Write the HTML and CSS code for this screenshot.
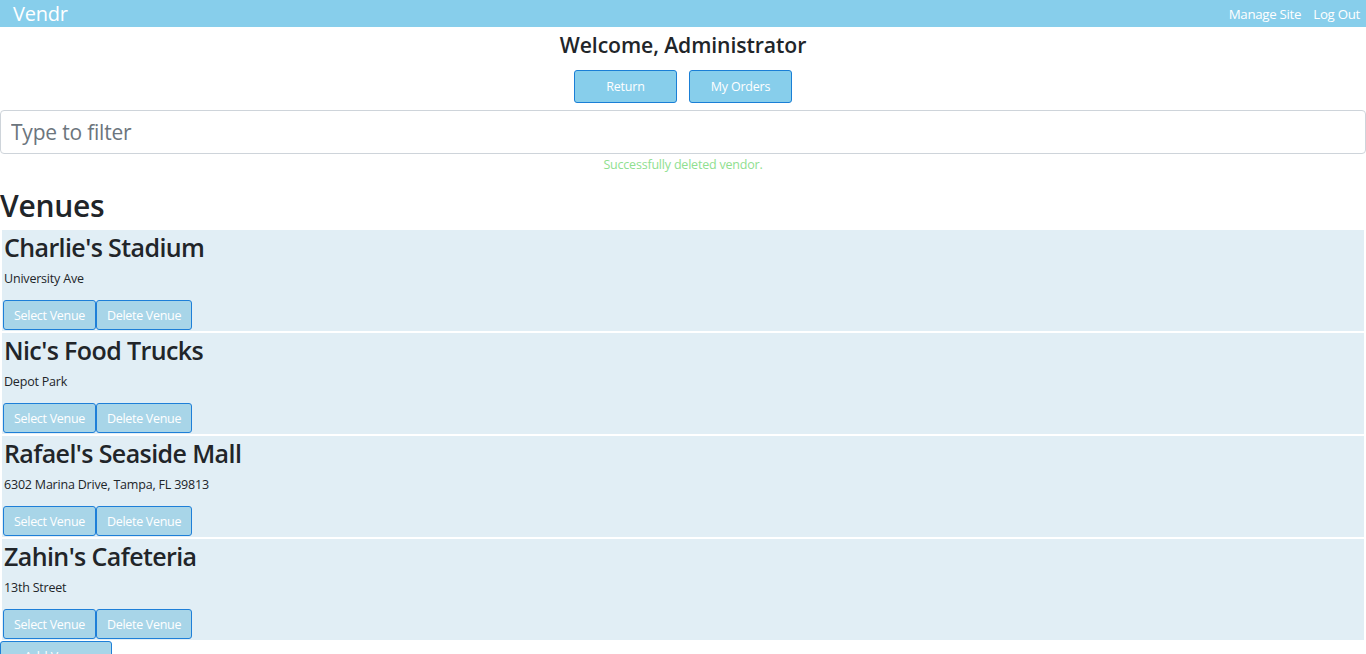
FILE: index.html
```html
<!DOCTYPE html>
<html>
<head>
<meta charset="utf-8">
<link rel="stylesheet" href="styles.css">
</head>
<body>
<nav class="navbar">
  <span class="brand">Vendr</span>
  <div class="nav-links">
    <a class="nav-link">Manage Site</a>
    <a class="nav-link">Log Out</a>
  </div>
</nav>
<h2 class="welcome">Welcome, Administrator</h2>
<div class="top-buttons">
  <button class="btn-top">Return</button>
  <button class="btn-top">My Orders</button>
</div>
<input class="filter" type="text" placeholder="Type to filter">
<p class="success">Successfully deleted vendor.</p>
<h1 class="venues-title">Venues</h1>
<div class="venue-list">
  <div class="venue">
    <h3 class="venue-name">Charlie's Stadium</h3>
    <p class="venue-addr">University Ave</p>
    <div class="venue-actions"><button class="btn-venue">Select Venue</button><button class="btn-venue">Delete Venue</button></div>
  </div>
  <div class="venue">
    <h3 class="venue-name">Nic's Food Trucks</h3>
    <p class="venue-addr">Depot Park</p>
    <div class="venue-actions"><button class="btn-venue">Select Venue</button><button class="btn-venue">Delete Venue</button></div>
  </div>
  <div class="venue">
    <h3 class="venue-name">Rafael's Seaside Mall</h3>
    <p class="venue-addr">6302 Marina Drive, Tampa, FL 39813</p>
    <div class="venue-actions"><button class="btn-venue">Select Venue</button><button class="btn-venue">Delete Venue</button></div>
  </div>
  <div class="venue">
    <h3 class="venue-name">Zahin's Cafeteria</h3>
    <p class="venue-addr">13th Street</p>
    <div class="venue-actions"><button class="btn-venue">Select Venue</button><button class="btn-venue">Delete Venue</button></div>
  </div>
</div>
<button class="btn-add">Add Venue</button>
</body>
</html>
```

FILE: styles.css
```css
* { box-sizing: border-box; }
html, body { margin: 0; padding: 0; }
body {
  font-family: "Open Sans", "Noto Sans", sans-serif;
  color: #212529;
  background: #fff;
  overflow: hidden;
}
.navbar {
  height: 27px;
  background: #87ceeb;
  display: flex;
  align-items: center;
  justify-content: space-between;
  padding: 0 6px 0 13px;
}
.brand {
  color: #fff;
  font-size: 20px;
  line-height: 27px;
  letter-spacing: -0.2px;
}
.nav-links { display: flex; gap: 12px; }
.nav-link {
  color: #fff;
  font-size: 13.3px;
  letter-spacing: -0.3px;
}
.welcome {
  margin: 4px 0 0;
  text-align: center;
  font-size: 21.2px;
  font-weight: 600;
  line-height: 28px;
  letter-spacing: -0.1px;
}
.top-buttons {
  display: flex;
  justify-content: center;
  gap: 12px;
  margin-top: 11px;
}
.btn-top {
  width: 103px;
  height: 33px;
  background: #87ceeb;
  border: 1px solid #1a7fd6;
  border-radius: 3px;
  color: #fff;
  font-family: inherit;
  font-size: 12.5px;
  letter-spacing: -0.2px;
}
.filter {
  display: block;
  width: 100%;
  height: 44px;
  margin-top: 7px;
  border: 1px solid #ced4da;
  border-radius: 4px;
  padding: 0 10px;
  font-family: inherit;
  font-size: 21px;
  color: #495057;
}
.filter::placeholder { color: #6c757d; letter-spacing: -0.2px; }
.success {
  margin: 2px 0 0;
  text-align: center;
  color: #8fe08f;
  font-size: 12.5px;
  line-height: 18px;
  letter-spacing: -0.2px;
}
.venues-title {
  margin: 12px 0 0;
  font-size: 30px;
  font-weight: 600;
  line-height: 40px;
  letter-spacing: -0.3px;
}
.venue-list {
  display: flex;
  flex-direction: column;
  gap: 2px;
  padding: 0 2px;
  margin-top: 4px;
}
.venue {
  background: #e1eef5;
  height: 101px;
  padding: 0 2px;
}
.venue-name {
  margin: 0;
  padding-top: 2px;
  font-size: 25px;
  font-weight: 600;
  line-height: 31px;
  letter-spacing: -0.6px;
}
.venue-addr {
  margin: 8px 0 0;
  font-size: 12.5px;
  line-height: 16px;
  letter-spacing: -0.2px;
}
.venue-actions {
  display: flex;
  margin-top: 13px;
  margin-left: -1px;
}
.btn-venue {
  height: 30px;
  padding: 0 10px;
  background: #a8d5e8;
  border: 1px solid #1e7fd8;
  border-radius: 3px;
  color: #fff;
  font-family: inherit;
  font-size: 12.5px;
  letter-spacing: -0.3px;
}
.btn-add {
  display: block;
  margin-top: 1px;
  width: 112px;
  height: 30px;
  background: #a8d5e8;
  border: 1px solid #1e7fd8;
  border-radius: 3px;
  color: #fff;
  font-family: inherit;
  font-size: 12.5px;
}
```
